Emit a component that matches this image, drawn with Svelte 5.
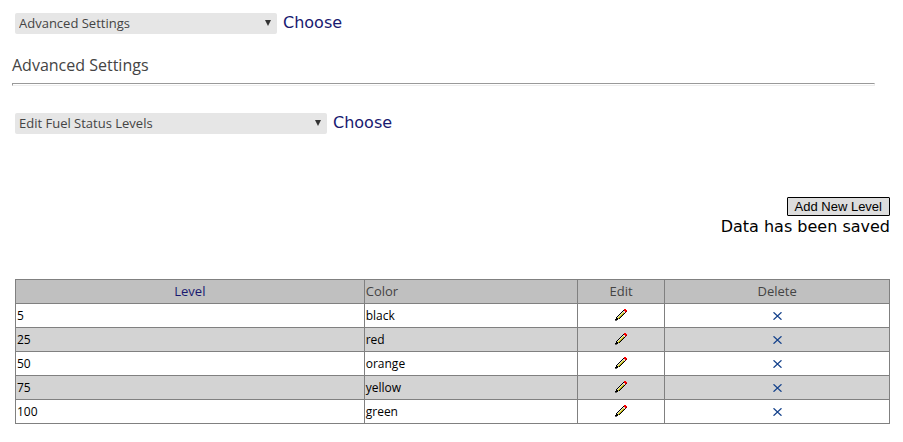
<script lang="ts">
    type Level = {
        value: number;
        color: string;
    };

    const sections = ["Advanced Settings"];
    const pages = ["Edit Fuel Status Levels"];

    let section = sections[0];
    let page = pages[0];
    let message = "Data has been saved";

    let levels: Level[] = [
        { value: 5, color: "black" },
        { value: 25, color: "red" },
        { value: 50, color: "orange" },
        { value: 75, color: "yellow" },
        { value: 100, color: "green" },
    ];

    function deleteLevel(level: Level) {
        levels = levels.filter((item) => item !== level);
    }
</script>

<main class="page">
    <div class="picker">
        <div class="select">
            <select aria-label="Section" bind:value={section}>
                {#each sections as name}
                    <option value={name}>{name}</option>
                {/each}
            </select>
            <svg class="arrow" width="6" height="6" viewBox="0 0 6 6" aria-hidden="true">
                <path d="M0 0h6L3 6z" fill="#333" />
            </svg>
        </div>
        <a class="choose" href="#section">Choose</a>
    </div>

    <h1>Advanced Settings</h1>
    <hr />

    <div class="picker">
        <div class="select wide">
            <select aria-label="Page" bind:value={page}>
                {#each pages as name}
                    <option value={name}>{name}</option>
                {/each}
            </select>
            <svg class="arrow" width="6" height="6" viewBox="0 0 6 6" aria-hidden="true">
                <path d="M0 0h6L3 6z" fill="#333" />
            </svg>
        </div>
        <a class="choose" href="#page">Choose</a>
    </div>

    <div class="actions">
        <button type="button" class="add">Add New Level</button>
        <span class="message" role="status">{message}</span>
    </div>

    <table>
        <colgroup>
            <col class="col-level" />
            <col class="col-color" />
            <col class="col-edit" />
            <col class="col-delete" />
        </colgroup>
        <thead>
            <tr>
                <th scope="col"><a href="#level">Level</a></th>
                <th scope="col" class="left">Color</th>
                <th scope="col">Edit</th>
                <th scope="col">Delete</th>
            </tr>
        </thead>
        <tbody>
            {#each levels as level}
                <tr>
                    <td>{level.value}</td>
                    <td>{level.color}</td>
                    <td>
                        <button type="button" class="icon" aria-label="Edit level {level.value}">
                            <svg width="12" height="12" viewBox="0 0 12 12" shape-rendering="crispEdges" aria-hidden="true">
                                <path
                                    fill="#000"
                                    d="M8 1h1v1h-1zM7 2h1v1h-1zM6 3h1v1h-1zM5 4h1v1h-1zM4 5h1v1h-1zM3 6h1v1h-1zM2 7h1v1h-1zM1 8h1v1h-1zM1 9h2v1h-2zM0 10h3v1h-3zM4 9h1v1h-1zM5 8h1v1h-1zM6 7h1v1h-1zM7 6h1v1h-1zM8 5h1v1h-1zM9 4h1v1h-1z"
                                />
                                <path fill="#666" d="M0 11h2v1h-2z" />
                                <path fill="#f00" d="M9 0h2v1h-2zM9 1h3v1h-3zM10 2h1v1h-1z" />
                                <path fill="#800000" d="M11 2h1v1h-1zM10 3h1v1h-1z" />
                                <path
                                    fill="#ddd"
                                    d="M8 2h2v1h-2zM7 3h1v1h-1zM9 3h1v1h-1zM6 4h1v1h-1zM5 5h1v1h-1zM4 6h1v1h-1zM3 7h1v1h-1zM2 8h1v1h-1z"
                                />
                                <path
                                    fill="#e8e030"
                                    d="M8 3h1v1h-1zM7 4h1v1h-1zM6 5h1v1h-1zM5 6h1v1h-1zM4 7h1v1h-1zM3 8h1v1h-1z"
                                />
                                <path
                                    fill="#a8a020"
                                    d="M8 4h1v1h-1zM7 5h1v1h-1zM6 6h1v1h-1zM5 7h1v1h-1zM4 8h1v1h-1zM3 9h1v1h-1z"
                                />
                            </svg>
                        </button>
                    </td>
                    <td>
                        <button
                            type="button"
                            class="icon delete"
                            aria-label="Delete level {level.value}"
                            on:click={() => deleteLevel(level)}
                        >
                            <svg width="9" height="8" viewBox="0 0 9 8" aria-hidden="true">
                                <path d="M.5.3 8.5 7.7M8.5.3.5 7.7" stroke="#16438c" stroke-width="1.3" />
                            </svg>
                        </button>
                    </td>
                </tr>
            {/each}
        </tbody>
    </table>
</main>

<style>
    :global(body) {
        margin: 0;
        background: #fff;
    }

    .page {
        padding: 12px 13px 18px 12px;
        color: #000;
        font-family: "Segoe UI", "Open Sans", "Noto Sans", sans-serif;
    }

    .picker {
        display: flex;
        align-items: center;
        gap: 6px;
        height: 22px;
        margin-left: 3px;
    }

    .select {
        position: relative;
        width: 262px;
    }

    .select.wide {
        width: 312px;
    }

    select {
        display: block;
        width: 100%;
        height: 21px;
        padding: 0 20px 0 4px;
        border: 0;
        border-radius: 2px;
        appearance: none;
        background: #e6e6e6;
        color: #444;
        font-family: inherit;
        font-size: 13px;
        line-height: 21px;
    }

    .arrow {
        position: absolute;
        top: 7px;
        right: 6px;
        pointer-events: none;
    }

    a {
        color: #191970;
        text-decoration: none;
    }

    .choose,
    .message {
        font-family: Verdana, "DejaVu Sans", sans-serif;
        font-size: 16px;
        line-height: 22px;
    }

    h1 {
        margin: 18px 0 0;
        color: #444;
        font-size: 16px;
        font-weight: 400;
        line-height: 26px;
    }

    hr {
        height: 1px;
        margin: 5px 15px 26px 0;
        border: 1px solid #eee;
        border-top-color: #999;
        border-left-color: #999;
    }

    .actions {
        display: flex;
        flex-direction: column;
        align-items: flex-end;
        margin-top: 63px;
    }

    .add {
        height: 19px;
        padding: 0 7px;
        border: 1px solid #000;
        border-radius: 1px;
        background: #ddd;
        color: #000;
        font-family: Arial, "Liberation Sans", sans-serif;
        font-size: 13px;
        line-height: 17px;
    }

    table {
        width: calc(100% - 3px);
        margin: 41px 0 0 3px;
        border-collapse: collapse;
        table-layout: fixed;
    }

    .col-level {
        width: 39.9%;
    }

    .col-color {
        width: 24.4%;
    }

    .col-edit {
        width: 10%;
    }

    .col-delete {
        width: 25.7%;
    }

    th,
    td {
        height: 23px;
        padding: 0 1px;
        border: 1px solid #808080;
        text-align: left;
    }

    th {
        background: #c0c0c0;
        color: #444;
        font-size: 13px;
        font-weight: 400;
        line-height: 23px;
        text-align: center;
    }

    th.left {
        text-align: left;
    }

    td {
        font-size: 12px;
        line-height: 23px;
    }

    tbody tr:nth-child(even) {
        background: #d3d3d3;
    }

    .icon {
        display: flex;
        align-items: center;
        justify-content: center;
        width: 100%;
        height: 23px;
        padding: 0 0 2px;
        border: 0;
        background: none;
        cursor: pointer;
    }

    .icon.delete {
        padding: 1px 0 0;
    }
</style>
